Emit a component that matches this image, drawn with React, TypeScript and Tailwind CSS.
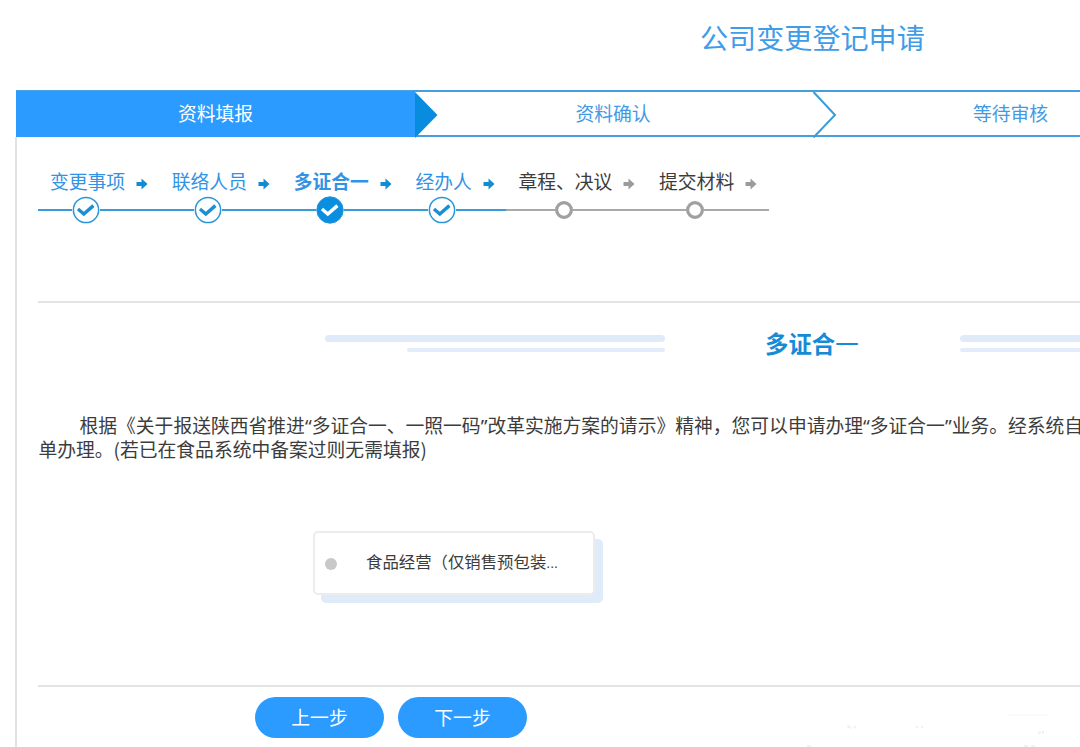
type StepState = "done" | "current" | "todo";

interface Step {
  label: string;
  state: StepState;
}

const steps: Step[] = [
  { label: "变更事项", state: "done" },
  { label: "联络人员", state: "done" },
  { label: "多证合一", state: "current" },
  { label: "经办人", state: "done" },
  { label: "章程、决议", state: "todo" },
  { label: "提交材料", state: "todo" },
];

function Arrow({ className }: { className: string }) {
  return (
    <svg className={`h-3 w-3 shrink-0 ${className}`} viewBox="0 0 12 12" fill="currentColor">
      <path d="M0.5 4H5.5V0.6L11.5 6L5.5 11.4V8H0.5Z" />
    </svg>
  );
}

function Marker({ state }: { state: StepState }) {
  if (state === "todo") {
    return (
      <svg className="h-[20px] w-[18px] shrink-0" viewBox="0 0 18 20">
        <circle cx="9" cy="10" r="7.4" fill="#fff" stroke="#a0a0a0" strokeWidth="3.2" />
      </svg>
    );
  }
  const active = state === "current";
  return (
    <svg className="h-[28px] w-[28px] shrink-0" viewBox="0 0 28 28">
      <circle
        cx="14"
        cy="14"
        r={active ? 13.2 : 12.6}
        fill={active ? "#0a8fe0" : "#fff"}
        stroke="#2a95d8"
        strokeWidth={active ? 1 : 1.5}
      />
      <path
        d="M6 13L11.8 18L21.4 9.6"
        fill="none"
        stroke={active ? "#fff" : "#1a8fd6"}
        strokeWidth="3.4"
      />
    </svg>
  );
}

function StepItem({ step }: { step: Step }) {
  const todo = step.state === "todo";
  const line = todo ? "bg-[#a9a9a9]" : "bg-[#389cd8]";
  const color = todo ? "text-[#3c3c3c]" : "text-[#3193e6]";
  return (
    <div className="flex shrink-0 flex-col">
      <div className={`flex h-[28px] items-center pr-[11.7px] pb-[2px] pl-[12px] text-[18.8px] ${color}`}>
        <span className={step.state === "current" ? "font-bold" : ""}>{step.label}</span>
        <Arrow className={`mt-[5px] ml-[11px] ${todo ? "text-[#9b9b9b]" : "text-[#128bd5]"}`} />
      </div>
      <div className="flex h-[28px] items-center">
        <div className={`h-[2px] flex-1 ${line}`} />
        <Marker state={step.state} />
        <div className={`h-[2px] flex-1 ${line}`} />
        <div className={`h-[2px] w-[26px] ${line}`} />
      </div>
    </div>
  );
}

function PhaseBar() {
  return (
    <div className="flex h-[47px] w-[1195px] shrink-0 text-[18.8px] text-[#4299e4]">
      <div className="flex w-[399px] items-center justify-center border-t border-[#4aa3e4] bg-[#2b9bff] pb-[2px] text-white">
        资料填报
      </div>
      <div className="flex w-[398px] border-y-2 border-[#459fdd]">
        <svg className="-mt-[2px] h-[48px] w-[24px] shrink-0" viewBox="0 0 24 48">
          <path d="M0 2L22.5 25L0 48Z" fill="#078ce0" />
        </svg>
        <span className="flex flex-1 items-center justify-center pr-[26px]">资料确认</span>
      </div>
      <div className="flex w-[398px] border-y-2 border-[#459fdd]">
        <svg className="-mt-[2px] h-[48px] w-[24px] shrink-0" viewBox="0 0 24 48">
          <path d="M0.5 2L22 25L0.5 47.5" fill="none" stroke="#3a9cda" strokeWidth="2" />
        </svg>
        <span className="flex flex-1 items-center justify-center pr-[27px]">等待审核</span>
      </div>
    </div>
  );
}

function Quote({ children }: { children: string }) {
  return <span className="font-['Noto_Sans',sans-serif] leading-none">{children}</span>;
}

function WatermarkTraces() {
  return (
    <svg className="absolute right-0 bottom-0 h-[40px] w-[280px]" viewBox="0 0 280 40">
      <g stroke="#f1f1f1" strokeWidth="2" fill="none">
        <path d="M47 19L51 21M54 19L56 21M116 19L118 21M121 19L123 21M238 26L241 25M243 24V27" />
        <path d="M208 8H248" stroke="#fafafa" />
        <path d="M7 39H11M224 39H228M231 39H235" />
      </g>
    </svg>
  );
}

export default function App() {
  return (
    <div className="relative flex h-[747px] w-[1080px] flex-col overflow-hidden bg-white pl-[16px] font-['Noto_Sans_CJK_SC',sans-serif] leading-none">
      <h1 className="h-[90px] shrink-0 pt-[23px] pl-[684px] text-[28.1px] leading-[28px] whitespace-nowrap text-[#419ce8]">
        公司变更登记申请
      </h1>
      <PhaseBar />
      <main className="-ml-px flex flex-1 flex-col border-l-2 border-[#e2e2e2] pl-[21px]">
        <div className="flex h-[164px] shrink-0 pt-[31px]">
          {steps.map((step) => (
            <StepItem key={step.label} step={step} />
          ))}
        </div>
        <section className="h-[386px] shrink-0 border-y-2 border-[#e3e3e3]">
          <div className="flex h-[82px] items-center">
            <div className="ml-[287px] flex w-[340px] shrink-0 flex-col items-end gap-[6px] pb-[2px]">
              <div className="h-[7px] w-full rounded-sm bg-[#e0ebfa]" />
              <div className="h-[4px] w-[258px] rounded-sm bg-[#e2ecfa]" />
            </div>
            <h2 className="ml-[100px] w-[195px] shrink-0 text-[23.4px] font-bold text-[#168bd5]">
              多证合<span className="font-normal">一</span>
            </h2>
            <div className="flex w-[340px] shrink-0 flex-col gap-[6px] pb-[2px]">
              <div className="h-[7px] w-full rounded-sm bg-[#e0ebfa]" />
              <div className="h-[4px] w-[258px] rounded-sm bg-[#e2ecfa]" />
            </div>
          </div>
          <p className="pt-[28px] pl-[0.5px] text-[18.79px] leading-[24px] whitespace-nowrap text-[#3c3c3c]">
            <span className="block pl-[41px]">
              根据《关于报送陕西省推进<Quote>“</Quote>多证合一、一照一码<Quote>”</Quote>
              改革实施方案的请示》精神，您可以申请办理<Quote>“</Quote>多证合一<Quote>”</Quote>
              业务。经系统自
            </span>
            <span className="block">单办理。(若已在食品系统中备案过则无需填报)</span>
          </p>
          <div className="mt-[70px] ml-[275px] flex h-[64px] w-[282px] items-center rounded-[5px] border-2 border-[#ececf0] bg-white pb-px pl-[10px] text-[16.4px] text-[#3c3c3c] shadow-[8px_8px_0_0_#e0ebfa]">
            <span className="mt-[2px] h-[12px] w-[12px] rounded-full bg-[#c8c8c8]" />
            <span className="-mt-[2px] ml-[29px] whitespace-nowrap">
              食品经营（仅销售预包装
              <span className="font-['Liberation_Sans',sans-serif] text-[14px]">...</span>
            </span>
          </div>
        </section>
        <div className="flex gap-[14px] pt-[10px] pl-[217px] text-[18.8px] text-white">
          <button className="h-[41px] w-[129px] rounded-full bg-[#2b9bff]">上一步</button>
          <button className="h-[41px] w-[129px] rounded-full bg-[#2b9bff]">下一步</button>
        </div>
      </main>
      <WatermarkTraces />
    </div>
  );
}
